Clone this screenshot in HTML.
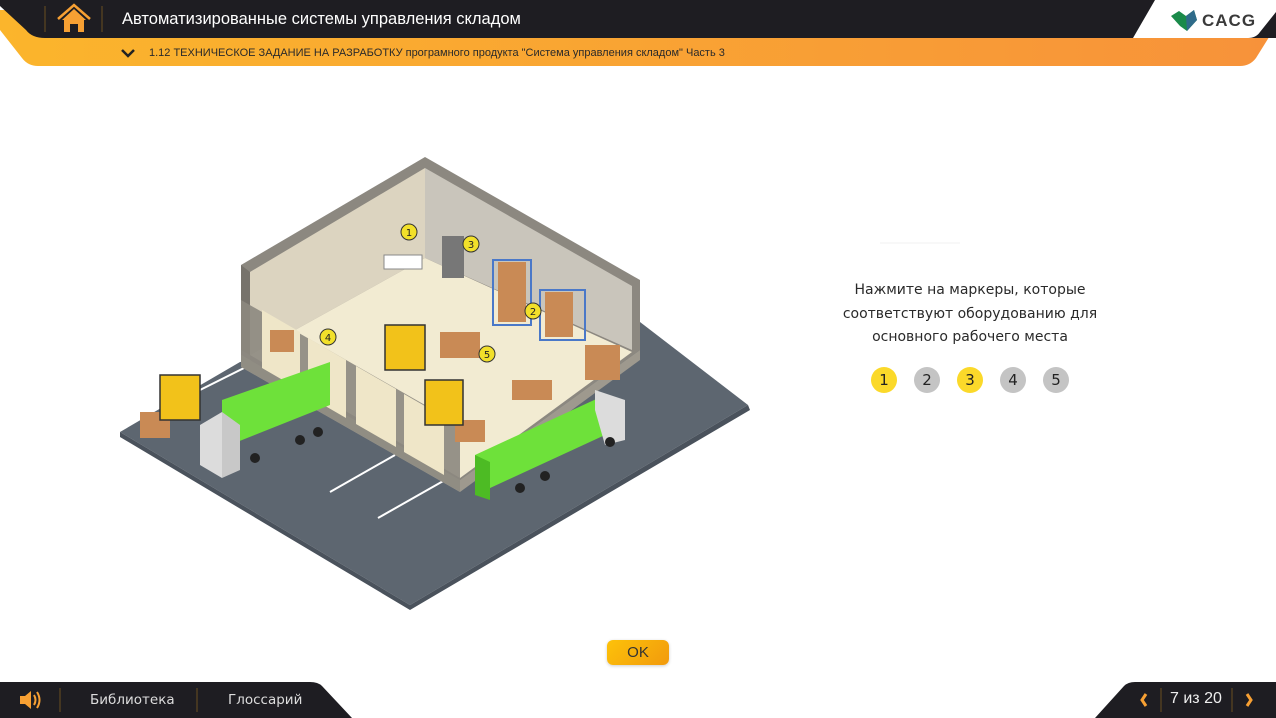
<!DOCTYPE html>
<html><head><meta charset="utf-8"><style>
*{margin:0;padding:0;box-sizing:border-box}
body{width:1276px;height:718px;overflow:hidden;background:#fff;font-family:"Liberation Sans",sans-serif;position:relative}
.abs{position:absolute}
.txt{color:#fff}
.mk{position:absolute;width:26px;height:26px;border-radius:50%;font-size:15px;line-height:26px;text-align:center;color:#222;font-family:"DejaVu Sans",sans-serif}
</style></head><body>
<svg class="abs" style="left:0;top:0" width="1276" height="80">
<defs><linearGradient id="og" x1="0" x2="1"><stop offset="0" stop-color="#fbb52c"/><stop offset="1" stop-color="#f7923a"/></linearGradient></defs>
<path d="M0 10 L0 30 L22 58 Q28 66 38 66 L1240 66 Q1250 66 1256 58 L1276 26 L1276 10 Z" fill="url(#og)"/>
<path d="M0 0 H1276 V38 H45 Q32 38 26 30 L0 6 Z" fill="#1e1d22"/>
<path d="M1155 0 H1276 V12 L1260 32 Q1256 38 1248 38 H1133 Z" fill="#fff"/>
<line x1="45" y1="6" x2="45" y2="32" stroke="#6a5020" stroke-width="1"/>
<line x1="102" y1="6" x2="102" y2="32" stroke="#6a5020" stroke-width="1"/>
<path d="M62 20 L74 9 L86 20 L84 20 L84 32 L78 32 L78 24 L70 24 L70 32 L64 32 L64 20 Z" fill="#f7a033"/>
<path d="M58 19 L74 5 L90 19" fill="none" stroke="#f7a033" stroke-width="2.5"/>
<path d="M122 50 L128 56 L134 50" fill="none" stroke="#222" stroke-width="2.5"/>
<path d="M1171 16 L1179 11 L1186 16 L1194 10 L1197 20 L1187 31 L1180 26 Z" fill="#1a8a4a"/>
<path d="M1186 16 L1194 10 L1197 20 L1187 31 Z" fill="#2f6b8a"/>
</svg>
<div class="abs txt" style="left:122px;top:10px;font-size:16.5px;font-weight:500">Автоматизированные системы управления складом</div>
<div class="abs" style="left:149px;top:47px;font-size:11px;color:#2a2a2a">1.12 ТЕХНИЧЕСКОЕ ЗАДАНИЕ НА РАЗРАБОТКУ програмного продукта "Система управления складом" Часть 3</div>
<div class="abs" style="left:1202px;top:11px;font-size:17px;font-weight:bold;color:#3a3a3a;letter-spacing:1px">CACG</div>

<svg class="abs" style="left:0;top:0" width="1276" height="718">
<polygon points="120,432 240,362 640,322 748,405 410,605" fill="#5d6670"/>
<polygon points="120,432 410,605 748,405 750,410 410,610 120,437" fill="#4a525c"/>
<g stroke="#fff" stroke-width="2">
<line x1="200" y1="390" x2="250" y2="365"/><line x1="250" y1="420" x2="300" y2="395"/>
<line x1="330" y1="492" x2="395" y2="455"/><line x1="378" y1="518" x2="445" y2="480"/>
</g>
<polygon points="241,265 425,157 640,280 640,350 460,480 241,355" fill="#8c8880"/>
<polygon points="250,272 425,168 425,258 250,355" fill="#dcd4c0"/>
<polygon points="425,168 632,286 632,350 425,258" fill="#c9c5bb"/>
<polygon points="250,355 425,258 632,352 460,478" fill="#f2ebd2"/>
<polygon points="241,355 460,480 460,492 241,367" fill="#b8b2a4"/>
<polygon points="460,480 640,350 640,360 460,492" fill="#9e998e"/>
<polygon points="241,265 250,272 250,355 241,350" fill="#77736c"/>
<polygon points="241,300 460,425 460,492 241,367" fill="#8c8880" opacity=".9"/>
<g fill="#efe6c8"><polygon points="262,310 300,332 300,390 262,368"/><polygon points="308,338 346,360 346,418 308,396"/><polygon points="356,366 396,389 396,447 356,424"/><polygon points="404,394 444,417 444,475 404,452"/></g>
<g fill="#c98a55"><rect x="270" y="330" width="24" height="22"/><rect x="440" y="332" width="40" height="26"/><rect x="498" y="262" width="28" height="60"/><rect x="545" y="292" width="28" height="45"/><rect x="512" y="380" width="40" height="20"/><rect x="585" y="345" width="35" height="35"/><rect x="140" y="412" width="30" height="26"/><rect x="455" y="420" width="30" height="22"/><rect x="490" y="458" width="18" height="12"/></g>
<g stroke="#4a78c8" stroke-width="2" fill="none"><rect x="493" y="260" width="38" height="65"/><rect x="540" y="290" width="45" height="50"/></g>
<rect x="384" y="255" width="38" height="14" fill="#fff" stroke="#888"/>
<rect x="442" y="236" width="22" height="42" fill="#777"/>
<g fill="#f2c21a" stroke="#333" stroke-width="1.5"><rect x="160" y="375" width="40" height="45"/><rect x="385" y="325" width="40" height="45"/><rect x="425" y="380" width="38" height="45"/></g>
<polygon points="222,400 330,362 330,405 222,448" fill="#6ee13a"/>
<polygon points="200,425 222,412 222,478 200,465" fill="#dcdcdc"/>
<polygon points="222,412 240,425 240,470 222,478" fill="#c8c8c8"/>
<polygon points="475,455 605,395 605,435 475,495" fill="#6ee13a"/>
<polygon points="475,455 490,462 490,500 475,495" fill="#4dbb24"/>
<polygon points="595,390 625,400 625,440 605,445 595,410" fill="#dcdcdc"/>
<g fill="#222"><circle cx="255" cy="458" r="5"/><circle cx="300" cy="440" r="5"/><circle cx="318" cy="432" r="5"/><circle cx="520" cy="488" r="5"/><circle cx="545" cy="476" r="5"/><circle cx="610" cy="442" r="5"/></g>
<g fill="#f2e02a" stroke="#333" stroke-width="1"><circle cx="409" cy="232" r="8"/><circle cx="471" cy="244" r="8"/><circle cx="533" cy="311" r="8"/><circle cx="328" cy="337" r="8"/><circle cx="487" cy="354" r="8"/></g>
<g font-family="DejaVu Sans" font-size="10" text-anchor="middle" fill="#222"><text x="409" y="236">1</text><text x="471" y="248">3</text><text x="533" y="315">2</text><text x="328" y="341">4</text><text x="487" y="358">5</text></g>
<line x1="880" y1="243" x2="960" y2="243" stroke="#f2f2f2"/>
</svg>

<div class="abs" style="left:820px;top:279px;width:300px;text-align:center;font-size:14px;line-height:23.5px;color:#2a2a2a;font-family:'DejaVu Sans',sans-serif">Нажмите на маркеры, которые соответствуют оборудованию для основного рабочего места</div>
<div class="mk" style="left:871px;top:367px;background:#fbd92a">1</div>
<div class="mk" style="left:914px;top:367px;background:#c4c4c4">2</div>
<div class="mk" style="left:957px;top:367px;background:#fbd92a">3</div>
<div class="mk" style="left:1000px;top:367px;background:#c4c4c4">4</div>
<div class="mk" style="left:1043px;top:367px;background:#c4c4c4">5</div>

<div class="abs" style="left:607px;top:640px;width:62px;height:25px;border-radius:6px;background:linear-gradient(135deg,#fdc20a,#f29a0c);text-align:center;line-height:25px;font-size:15px;color:#333;box-shadow:0 1px 3px rgba(0,0,0,.2)">OK</div>

<svg class="abs" style="left:0;top:682px" width="1276" height="36">
<path d="M0 0 H310 Q318 0 322 4 L352 36 H0 Z" fill="#1e1d22"/>
<path d="M1276 0 H1135 Q1128 0 1124 4 L1095 36 H1276 Z" fill="#1e1d22"/>
<line x1="60" y1="6" x2="60" y2="30" stroke="#6a5020"/><line x1="197" y1="6" x2="197" y2="30" stroke="#6a5020"/>
<line x1="1161" y1="6" x2="1161" y2="30" stroke="#6a5020"/><line x1="1232" y1="6" x2="1232" y2="30" stroke="#6a5020"/>
<path d="M20 14 H25 L31 9 V27 L25 22 H20 Z" fill="#f7a033"/>
<path d="M34 13 Q37 18 34 23 M37 10 Q42 18 37 26" fill="none" stroke="#f7a033" stroke-width="2"/>
<path d="M1146 12 L1142 18 L1146 24" fill="none" stroke="#f7a033" stroke-width="3"/>
<path d="M1247 12 L1251 18 L1247 24" fill="none" stroke="#f7a033" stroke-width="3"/>
</svg>
<div class="abs txt" style="left:90px;top:692px;font-size:13.5px;color:#ddd;font-family:'DejaVu Sans',sans-serif">Библиотека</div>
<div class="abs txt" style="left:228px;top:692px;font-size:13.5px;color:#ddd;font-family:'DejaVu Sans',sans-serif">Глоссарий</div>
<div class="abs txt" style="left:1170px;top:690px;font-size:16px;color:#eee">7 из 20</div>
</body></html>
